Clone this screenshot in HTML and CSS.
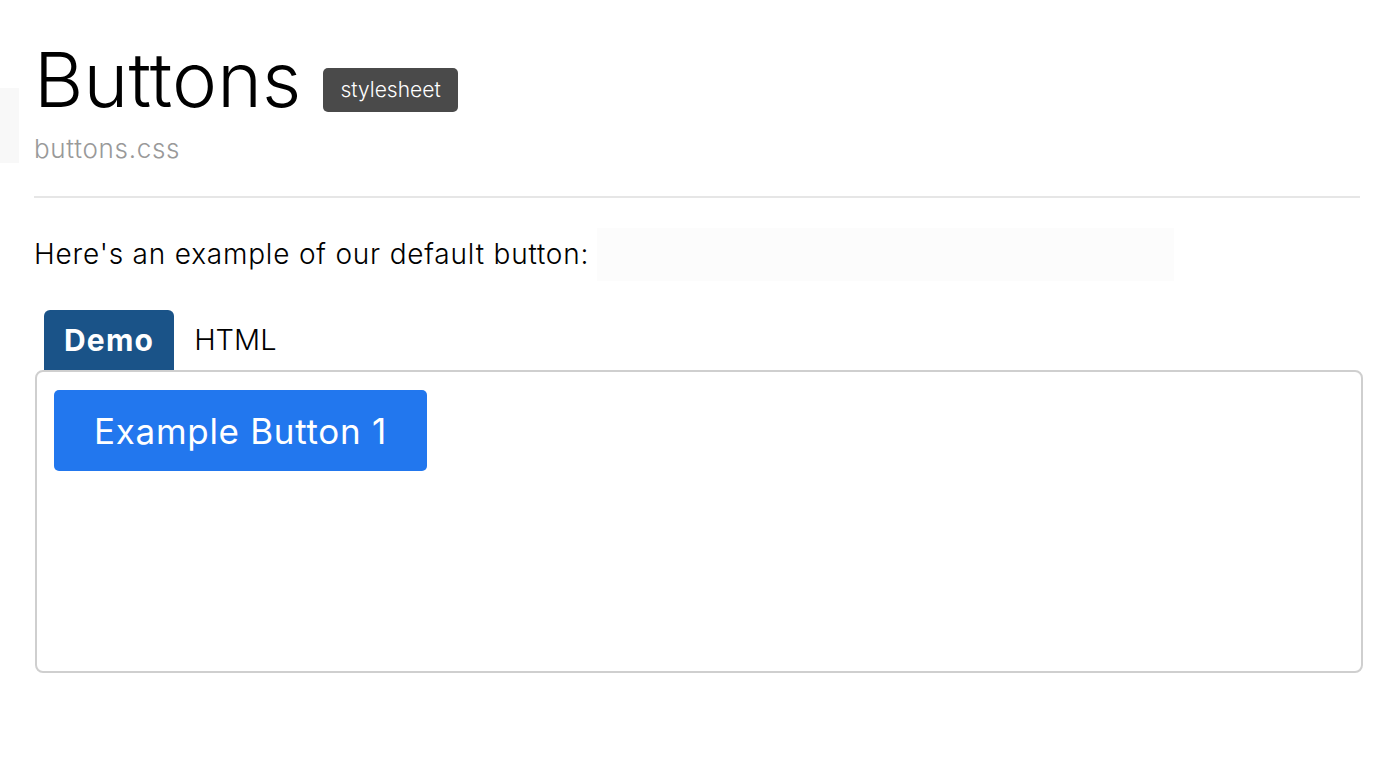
FILE: index.html
```html
<!DOCTYPE html>
<html>
<head>
<meta charset="utf-8">
<link rel="stylesheet" href="styles.css">
</head>
<body>
<div class="side-tab"></div>
<main class="page">
  <header class="header">
    <div class="title-row">
      <h1 class="title">Buttons</h1>
      <span class="badge">stylesheet</span>
    </div>
    <div class="subtitle">buttons.css</div>
  </header>
  <hr class="rule">
  <div class="intro">
    <p class="intro-text">Here's an example of our default button:</p>
    <div class="intro-blank"></div>
  </div>
  <div class="tabs">
    <div class="tab tab-active">Demo</div>
    <div class="tab">HTML</div>
  </div>
  <div class="panel">
    <button class="btn">Example Button 1</button>
  </div>
</main>
</body>
</html>
```
FILE: styles.css
```css
html, body {
  margin: 0;
  padding: 0;
  background: #fff;
}
body {
  font-family: Inter, "Liberation Sans", sans-serif;
  font-weight: 300;
  color: #000;
  position: relative;
}
.side-tab {
  position: absolute;
  left: 0;
  top: 88px;
  width: 19px;
  height: 75px;
  background: #f8f8f8;
}
.page {
  padding: 0 34px;
}
.header {
  padding-top: 34px;
}
.title-row {
  display: flex;
  align-items: center;
  gap: 22px;
  height: 90px;
}
.title {
  margin: 0;
  font-size: 76px;
  font-weight: 300;
  line-height: 90px;
  letter-spacing: 0.2px;
}
.badge {
  background: #4a4a4a;
  color: #fff;
  font-size: 21px;
  font-weight: 300;
  border-radius: 5px;
  padding: 0 17px;
  height: 44px;
  line-height: 44px;
  margin-top: 22px;
}
.subtitle {
  color: #999;
  font-size: 26px;
  line-height: 34px;
  margin-top: 8px;
  letter-spacing: 0.7px;
}
.rule {
  border: none;
  border-top: 2px solid #e6e6e6;
  margin: 30px 0 0;
}
.intro {
  display: flex;
  align-items: center;
  margin-top: 29px;
}
.intro-text {
  margin: 0;
  font-size: 28px;
  line-height: 54px;
  letter-spacing: 0.8px;
}
.intro-blank {
  width: 577px;
  height: 53px;
  background: #fcfcfc;
  margin-left: 8px;
}
.tabs {
  display: flex;
  align-items: flex-end;
  margin-top: 28px;
  padding-left: 10px;
  height: 61px;
}
.tab {
  font-size: 29px;
  line-height: 60px;
  padding: 0 20px;
}
.tab-active {
  background: #1a5388;
  color: #fff;
  font-weight: 700;
  font-size: 30px;
  letter-spacing: 1.2px;
  border-radius: 6px 6px 0 0;
}
.panel {
  box-sizing: border-box;
  margin: 0 -3px 0 1px;
  height: 303px;
  border: 2px solid #cfcfcf;
  border-radius: 8px;
  padding: 18px 17px 17px;
}
.btn {
  background: #2277ee;
  color: #fff;
  border: none;
  border-radius: 5px;
  font-family: Inter, "Liberation Sans", sans-serif;
  font-weight: 400;
  font-size: 35px;
  letter-spacing: 0.7px;
  height: 81px;
  padding: 0 40px;
  cursor: pointer;
}
```
